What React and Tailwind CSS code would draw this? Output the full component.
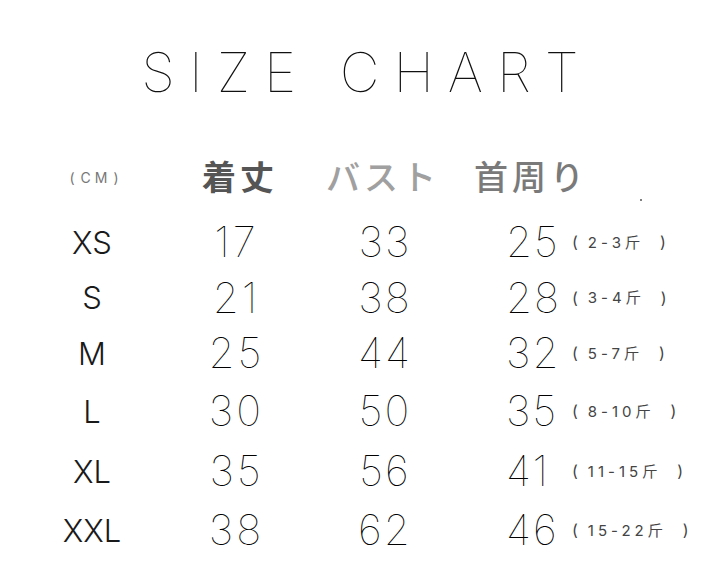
import React from 'react';

const rows = [
  { size: 'XS', a: '17', b: '33', c: '25', w: '2-3斤', h: 'h-[56px]' },
  { size: 'S', a: '21', b: '38', c: '28', w: '3-4斤', h: 'h-[55px]' },
  { size: 'M', a: '25', b: '44', c: '32', w: '5-7斤', h: 'h-[56px]' },
  { size: 'L', a: '30', b: '50', c: '35', w: '8-10斤', h: 'h-[60px]' },
  { size: 'XL', a: '35', b: '56', c: '41', w: '11-15斤', h: 'h-[60px]' },
  { size: 'XXL', a: '38', b: '62', c: '46', w: '15-22斤', h: 'h-[58px]' },
];

export default function App() {
  return (
    <div className="w-[720px] h-[577px] bg-white overflow-hidden font-['Inter','Noto_Sans_CJK_JP',sans-serif]">
      {/* Title */}
      <div className="h-[142px] flex items-start justify-center pt-[45px]">
        <h1 className="text-[55px] leading-none font-thin tracking-[14px] text-[#111] pl-[14px]">
          SIZE CHART
        </h1>
      </div>

      {/* Header */}
      <div className="h-[72px] flex items-center pl-[40px]">
        <div className="w-[104px] flex justify-center text-[14px] text-[#777] leading-none pl-[4px]">
          <span>(</span>
          <span className="ml-[6px] tracking-[4px]">CM</span>
          <span className="ml-[2px]">)</span>
        </div>
        <div className="ml-[58px] text-[34px] font-bold tracking-[4px] text-[#555] leading-none">着丈</div>
        <div className="ml-[48px] text-[34px] font-medium tracking-[4px] text-[#a0a0a0] leading-none whitespace-nowrap">バスト</div>
        <div className="ml-[34px] text-[34px] font-medium tracking-[4px] text-[#7a7a7a] leading-none">首周り</div>
        <div className="ml-[52px] mt-[44px] w-[2px] h-[2px] bg-[#555] rounded-full" />
      </div>

      {/* Rows */}
      {rows.map((r) => (
        <div key={r.size} className={`${r.h} flex items-center pl-[40px] text-[#000]`}>
          <div className="w-[104px] text-center text-[31px] font-light leading-none text-[#1a1a1a]">{r.size}</div>
          <div className="w-[182px] text-center text-[42px] font-thin leading-none tracking-[3px] pl-[3px]">{r.a}</div>
          <div className="w-[118px] text-center text-[42px] font-thin leading-none tracking-[2px]">{r.b}</div>
          <div className="ml-[62px] w-[66px] text-[42px] font-thin leading-none tracking-[2px]">{r.c}</div>
          <div className="flex items-center text-[15px] leading-none text-[#444] whitespace-nowrap">
            <span className="text-[16px]">(</span>
            <span className="ml-[10px] tracking-[4px]">{r.w}</span>
            <span className="ml-[16px] text-[16px]">)</span>
          </div>
        </div>
      ))}
    </div>
  );
}
